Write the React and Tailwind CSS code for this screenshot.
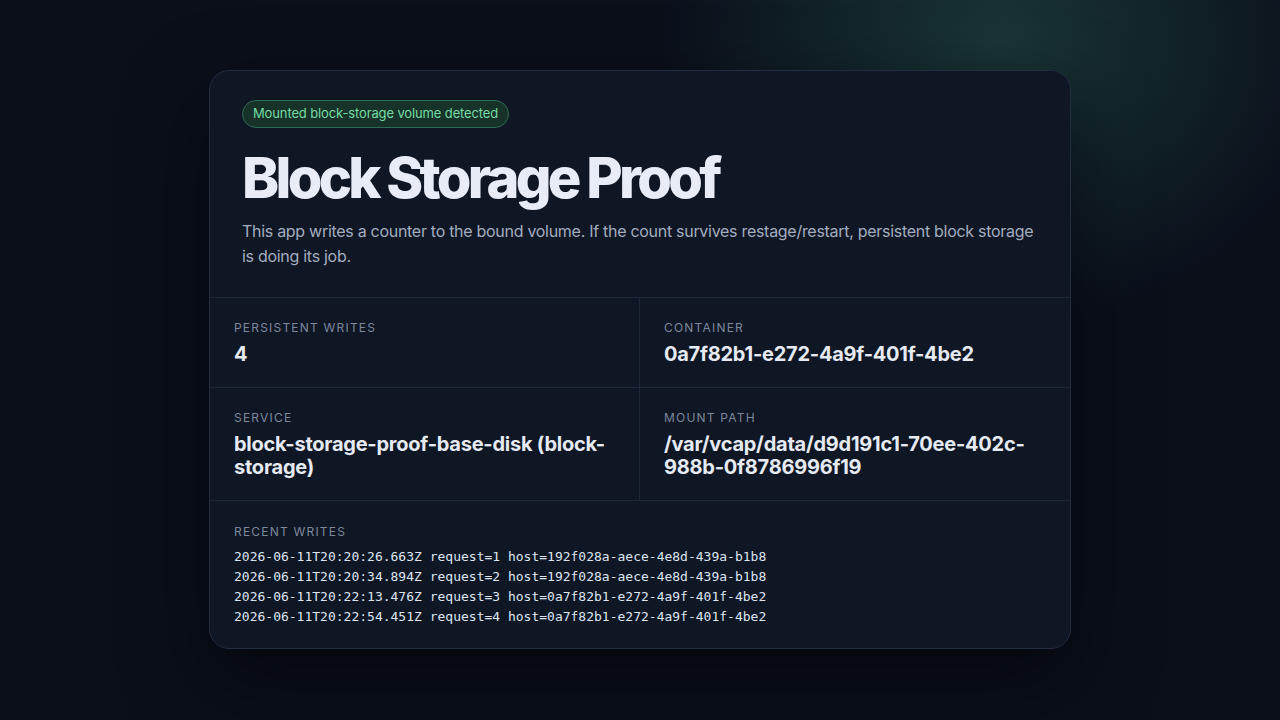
import React from 'react'

const writes = [
  '2026-06-11T20:20:26.663Z request=1 host=192f028a-aece-4e8d-439a-b1b8',
  '2026-06-11T20:20:34.894Z request=2 host=192f028a-aece-4e8d-439a-b1b8',
  '2026-06-11T20:22:13.476Z request=3 host=0a7f82b1-e272-4a9f-401f-4be2',
  '2026-06-11T20:22:54.451Z request=4 host=0a7f82b1-e272-4a9f-401f-4be2',
]

function Stat({ label, value, className }) {
  return (
    <div className={'px-6 pt-[22px] pb-[21px] ' + className}>
      <div className="text-[12px] leading-4 uppercase tracking-[0.1em] text-[#7d889b]">{label}</div>
      <div className="mt-[7px] text-[20px] leading-[23px] font-bold text-[#e5eaf3] tracking-[-0.012em]">{value}</div>
    </div>
  )
}

export default function App() {
  return (
    <div
      className="min-h-[720px] w-full flex justify-center pt-[70px] bg-[#0a0f1a] bg-[radial-gradient(ellipse_460px_380px_at_1000px_40px,rgba(38,84,78,0.55),transparent_75%)]"
      style={{ fontFamily: 'Inter, "Noto Sans", sans-serif' }}
    >
      <div className="w-[862px] h-[579px] rounded-[20px] border border-[#222d40] bg-[#0f1624] shadow-[0_30px_80px_rgba(0,0,0,0.55)] overflow-hidden flex flex-col">
        {/* header */}
        <div className="px-8 pt-[29px] pb-[28px] border-b border-[#1e2738]">
          <span className="inline-flex items-center h-[28px] px-[10px] rounded-full border border-[#2e6b55] bg-[#173329] text-[13px] tracking-[-0.01em] text-[#74dba6]">
            Mounted block-storage volume detected
          </span>
          <h1 className="mt-[22px] text-[56px] leading-[56px] font-extrabold tracking-[-0.066em] text-[#e8ecf6]">
            Block Storage Proof
          </h1>
          <p className="mt-[13px] text-[16px] leading-[25px] tracking-[-0.018em] text-[#a3adbf]">
            This app writes a counter to the bound volume. If the count survives restage/restart, persistent block storage is doing its job.
          </p>
        </div>

        {/* stats grid */}
        <div className="grid grid-cols-2">
          <Stat label="Persistent writes" value="4" className="border-r border-b border-[#1e2738]" />
          <Stat label="Container" value="0a7f82b1-e272-4a9f-401f-4be2" className="border-b border-[#1e2738]" />
          <Stat label="Service" value="block-storage-proof-base-disk (block-storage)" className="border-r border-b border-[#1e2738]" />
          <Stat label="Mount path" value="/var/vcap/data/d9d191c1-70ee-402c-988b-0f8786996f19" className="border-b border-[#1e2738]" />
        </div>

        {/* recent writes */}
        <div className="px-6 pt-[23px]">
          <div className="text-[12px] leading-4 uppercase tracking-[0.1em] text-[#7d889b]">Recent writes</div>
          <div className="mt-[7px] text-[13px] leading-[20px] text-[#dde5f1]" style={{ fontFamily: '"DejaVu Sans Mono", monospace' }}>
            {writes.map((w) => (
              <div key={w}>{w}</div>
            ))}
          </div>
        </div>
      </div>
    </div>
  )
}
